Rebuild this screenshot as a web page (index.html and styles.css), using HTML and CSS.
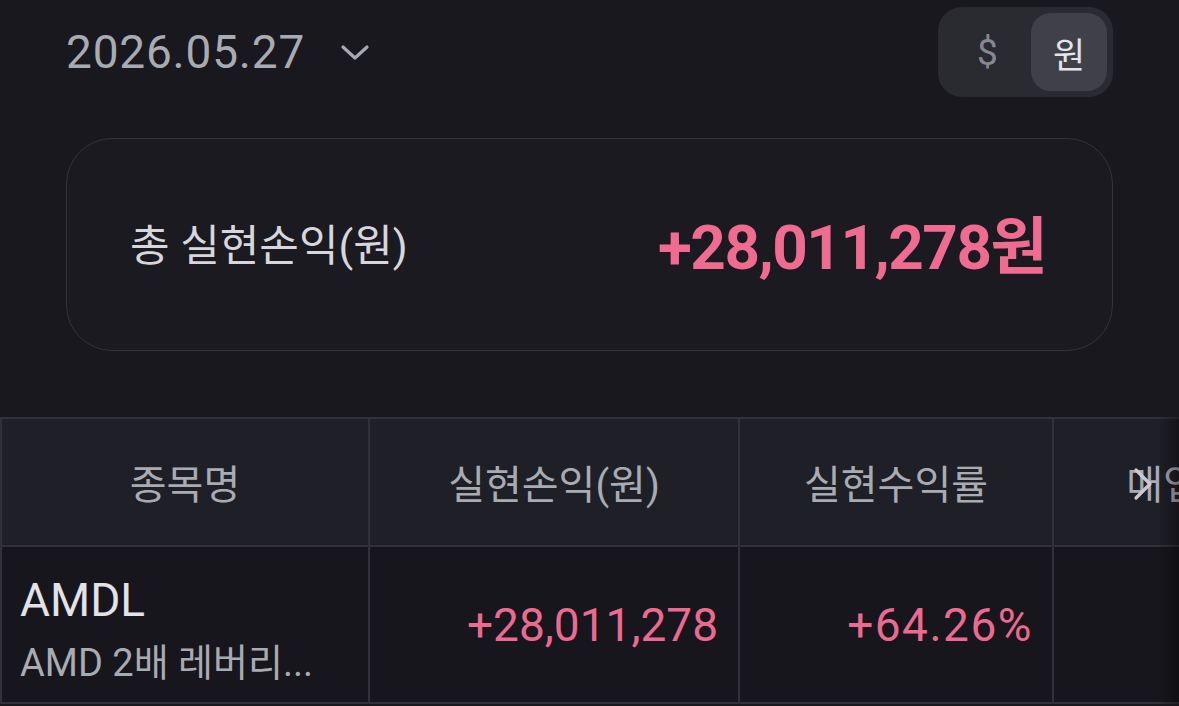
FILE: index.html
```html
<!DOCTYPE html>
<html lang="ko">
<head>
    <meta charset="UTF-8">
    <meta name="viewport" content="width=device-width, initial-scale=1.0">
    <title>실현손익</title>
    <link rel="stylesheet" href="styles.css">
</head>
<body>

    <!-- Date picker + currency toggle -->
    <div class="top-bar">
        <div class="date-picker">
            <span class="date-text">2026.05.27</span>
            <svg class="date-chevron" width="30" height="20" viewBox="0 0 30 20">
                <path d="M3 4 L15 15 L27 4" fill="none" stroke="#a7a9b1" stroke-width="3.2" stroke-linecap="round" stroke-linejoin="round"/>
            </svg>
        </div>
        <div class="currency-toggle">
            <span class="currency-option">$</span>
            <span class="currency-option active">원</span>
        </div>
    </div>

    <!-- Summary card -->
    <div class="summary-card">
        <span class="summary-label">총 실현손익(원)</span>
        <span class="summary-value">+28,011,278원</span>
    </div>

    <!-- Realized profit table -->
    <div class="table-wrap">
        <table class="profit-table">
            <colgroup>
                <col class="col-name">
                <col class="col-profit">
                <col class="col-rate">
                <col class="col-buy">
            </colgroup>
            <thead>
                <tr>
                    <th>종목명</th>
                    <th>실현손익(원)</th>
                    <th>실현수익률</th>
                    <th>매입금액(원)</th>
                </tr>
            </thead>
            <tbody>
                <tr>
                    <td class="stock-cell">
                        <div class="stock-symbol">AMDL</div>
                        <div class="stock-name">AMD 2배 레버리...</div>
                    </td>
                    <td class="num-cell plus">+28,011,278</td>
                    <td class="num-cell plus rate">+64.26%</td>
                    <td class="num-cell"></td>
                </tr>
            </tbody>
        </table>
        <div class="scroll-fade"></div>
        <svg class="scroll-arrow" width="22" height="34" viewBox="0 0 22 34">
            <path d="M4 3 L18 17 L4 31" fill="none" stroke="#c9c9cf" stroke-width="3.2" stroke-linecap="round" stroke-linejoin="round"/>
        </svg>
    </div>

</body>
</html>
```

FILE: styles.css
```css
body {
    margin: 0;
    background-color: #19181e;
    font-family: Roboto, "Noto Sans CJK KR", sans-serif;
    color: #d9d9de;
    overflow: hidden;
}

/* Top bar */
.top-bar {
    display: flex;
    justify-content: space-between;
    align-items: center;
    padding: 7px 66px 0 66px;
}

.date-picker {
    display: flex;
    align-items: center;
    gap: 35px;
}

.date-text {
    font-size: 46px;
    color: #a9abb3;
    letter-spacing: 0.8px;
}

.date-chevron {
    margin-top: 2px;
}

.currency-toggle {
    display: flex;
    align-items: center;
    width: 175px;
    height: 90px;
    box-sizing: border-box;
    padding: 6px;
    background-color: #2a2a31;
    border-radius: 24px;
}

.currency-option {
    display: flex;
    align-items: center;
    justify-content: center;
    height: 78px;
    width: 87px;
    font-size: 37px;
    color: #868891;
}

.currency-option.active {
    width: 76px;
    background-color: #404048;
    border-radius: 20px;
    color: #e4e4e9;
    font-size: 35px;
}

/* Summary card */
.summary-card {
    display: flex;
    justify-content: space-between;
    align-items: center;
    height: 213px;
    box-sizing: border-box;
    margin: 41px 66px 0 66px;
    padding: 0 66px 6px 63px;
    border: 1.5px solid #34333a;
    border-radius: 46px;
    background-color: #1b1a20;
}

.summary-label {
    font-size: 43px;
    color: #d6d6dc;
}

.summary-value {
    font-size: 62px;
    font-weight: 700;
    color: #f06b90;
    letter-spacing: -1.5px;
}

/* Table */
.table-wrap {
    position: relative;
    margin-top: 66px;
    overflow: hidden;
}

.profit-table {
    width: 1410px;
    table-layout: fixed;
    border-collapse: collapse;
}

.col-name { width: 368px; }
.col-profit { width: 370px; }
.col-rate { width: 314px; }
.col-buy { width: 358px; }

.profit-table th,
.profit-table td {
    border: 2px solid #32313a;
}

.profit-table th {
    height: 126px;
    background-color: #1f1f27;
    font-size: 40px;
    font-weight: 400;
    color: #a9abb3;
    text-align: center;
    white-space: nowrap;
    padding: 0;
}

.profit-table td {
    height: 155px;
    background-color: #17161c;
    padding: 0;
}

.profit-table td.stock-cell {
    height: 129px;
    padding: 26px 0 0 18px;
    vertical-align: top;
}

.stock-symbol {
    font-size: 46px;
    color: #e2e2e7;
    line-height: 54px;
}

.stock-name {
    font-size: 38px;
    color: #a9abb3;
    line-height: 54px;
    margin-top: 9px;
}

.num-cell {
    text-align: right;
    padding-right: 20px !important;
    font-size: 46px;
}

.num-cell.rate {
    letter-spacing: 1.5px;
    padding-right: 19px !important;
}

.plus {
    color: #ec6a8f;
}

.scroll-fade {
    position: absolute;
    top: 0;
    right: 0;
    width: 22px;
    height: 100%;
    background: linear-gradient(to right, rgba(0, 0, 0, 0), rgba(0, 0, 0, 0.35));
}

.scroll-arrow {
    position: absolute;
    top: 50px;
    left: 1132px;
}
```
